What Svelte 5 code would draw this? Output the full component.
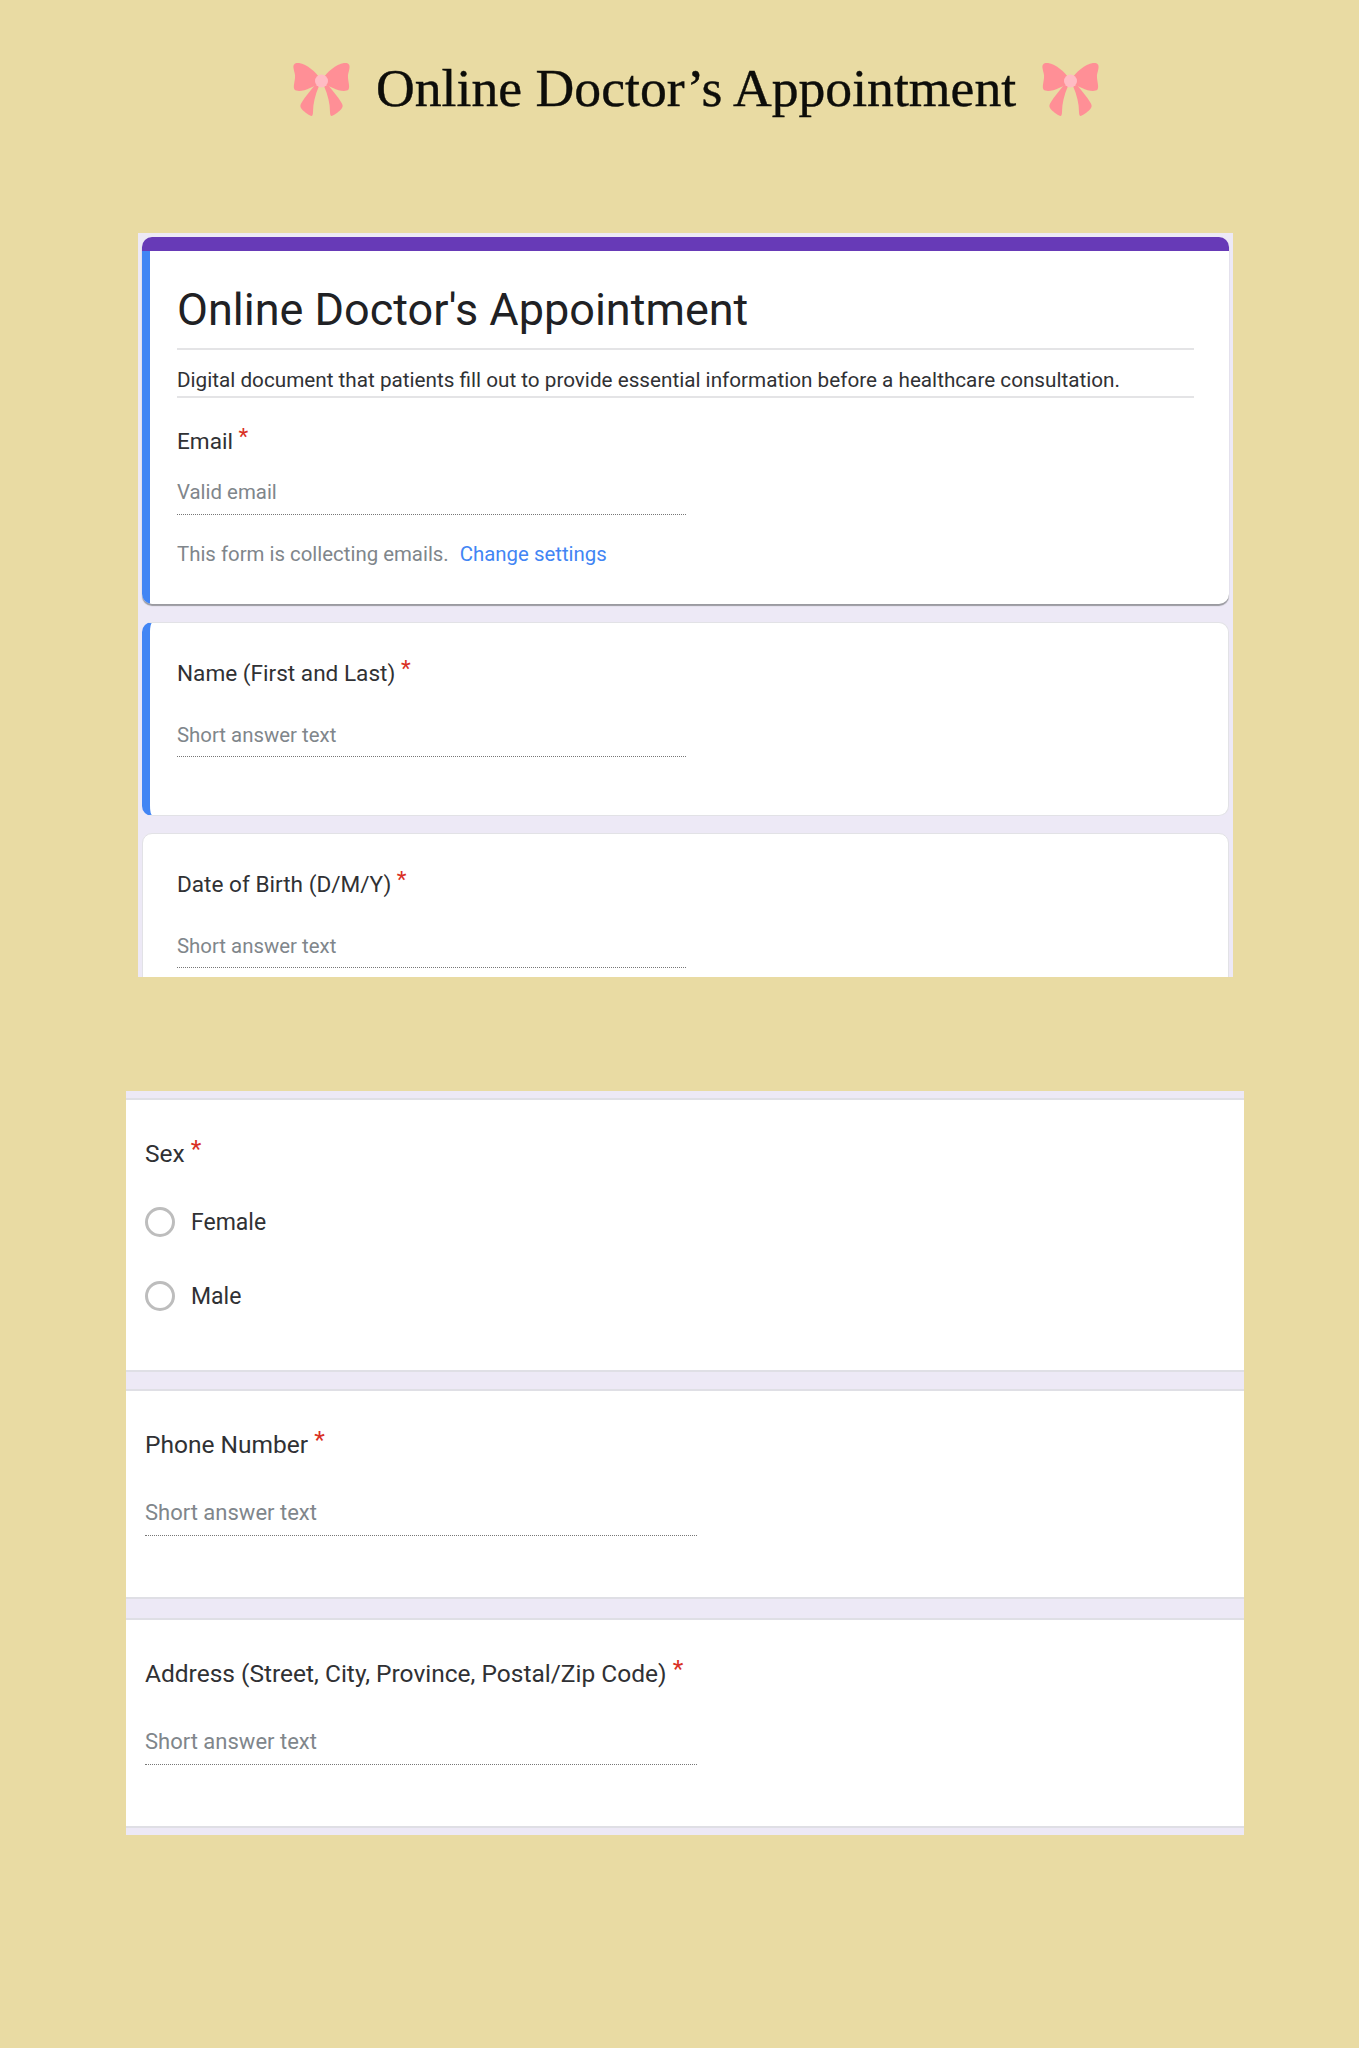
<script>
	const topFields = [
		{ label: 'Name (First and Last)', active: true },
		{ label: 'Date of Birth (D/M/Y)', active: false }
	];
	const bottomFields = ['Phone Number', 'Address (Street, City, Province, Postal/Zip Code)'];
	const sexOptions = ['Female', 'Male'];
</script>

{#snippet bow()}
	<svg class="bow" viewBox="8 12 57 54" aria-hidden="true">
		{#each ['', 'translate(73 0) scale(-1 1)'] as flip}
			<g transform={flip} fill="#ff8f96">
				<path d="M36 30C31 22 22 14 14 13C10 12.500 8 14 8.500 18C9 22 10.500 24 10 28C9.500 33 8 37 9.500 39.500C12 42 19 41 25 38C30 36 34 34 36 32Z" />
				<path d="M30 35C25 41 20 47 17 52C15 55 15 56 16 58C18 61 23 65 26.500 66C27.500 66 28 64 28 62C28 54 30 45 34 36Z" />
			</g>
		{/each}
		<circle cx="36.5" cy="31" r="6.5" fill="#ffbcc4" />
	</svg>
{/snippet}

<main class="page">
	<header class="header">
		{@render bow()}
		<h1>Online Doctor’s Appointment</h1>
		{@render bow()}
	</header>

	<section class="panel panel-top">
		<div class="card card-head">
			<div class="purple"></div>
			<div class="head-body">
				<h2>Online Doctor's Appointment</h2>
				<p class="desc">Digital document that patients fill out to provide essential information before a healthcare consultation.</p>
				<p class="label email-label">Email <span class="star">*</span></p>
				<div class="answer email-answer">Valid email</div>
				<p class="collect">This form is collecting emails.<a href="#settings">Change settings</a></p>
			</div>
		</div>

		{#each topFields as field}
			<div class="card card-field" class:active={field.active}>
				<p class="label">{field.label} <span class="star">*</span></p>
				<div class="answer">Short answer text</div>
			</div>
		{/each}
	</section>

	<section class="panel panel-bottom">
		<div class="row row-sex">
			<p class="label">Sex <span class="star">*</span></p>
			{#each sexOptions as option}
				<div class="option">
					<span class="radio"></span>
					<span>{option}</span>
				</div>
			{/each}
		</div>
		{#each bottomFields as field}
			<div class="row row-field">
				<p class="label">{field} <span class="star">*</span></p>
				<div class="answer">Short answer text</div>
			</div>
		{/each}
	</section>
</main>

<style>
	:global(body) {
		margin: 0;
		background: #e9dba3;
	}
	.page {
		height: 2048px;
		font-family: Roboto, "Liberation Sans", sans-serif;
		color: #202124;
		overflow: hidden;
	}
	p {
		margin: 0;
	}

	.header {
		display: flex;
		align-items: flex-start;
		height: 233px;
		box-sizing: border-box;
		padding: 62px 0 0 293px;
	}
	.bow {
		width: 57px;
		height: 54px;
		flex: none;
	}
	h1 {
		margin: -2px 26px 0 26px;
		font-family: "Liberation Serif", serif;
		font-size: 53.7px;
		line-height: 56px;
		font-weight: 400;
		color: #0d0d0a;
		white-space: nowrap;
		-webkit-text-stroke: 0.4px #0d0d0a;
	}

	.panel {
		background: #ede9f6;
	}
	.panel-top {
		width: 1095px;
		height: 744px;
		margin-left: 138px;
		box-sizing: border-box;
		padding: 4px 4px 0;
		overflow: hidden;
	}
	.card {
		background: #fff;
		border-radius: 10px;
		box-sizing: border-box;
	}
	.card-head {
		height: 367px;
		overflow: hidden;
		box-shadow: 0 2px 1px #9a9aa0;
		margin-bottom: 18px;
	}
	.purple {
		height: 14px;
		background: #673ab7;
	}
	.head-body {
		height: 353px;
		box-sizing: border-box;
		border-left: 8px solid #4285f4;
		padding: 0 35px 0 27px;
	}
	h2 {
		margin: 0;
		padding-top: 33px;
		height: 99px;
		box-sizing: border-box;
		font-size: 45px;
		line-height: 52px;
		font-weight: 400;
		border-bottom: 2px solid #e4e4e6;
	}
	.desc {
		height: 48px;
		box-sizing: border-box;
		padding-top: 17px;
		font-size: 20.7px;
		line-height: 26px;
		border-bottom: 2px solid #e4e4e6;
		color: #303134;
	}
	.label {
		font-size: 22.6px;
		line-height: 30px;
		color: #303134;
	}
	.star {
		color: #d93025;
		vertical-align: 5px;
		line-height: 0;
	}
	.email-label {
		padding-top: 29px;
	}
	.answer {
		width: 509px;
		font-size: 20.4px;
		line-height: 26px;
		color: #80868b;
		border-bottom: 1px dotted #777;
	}
	.email-answer {
		margin-top: 22px;
		padding-bottom: 9px;
	}
	.collect {
		margin-top: 26px;
		font-size: 20.4px;
		line-height: 26px;
		color: #80868b;
	}
	.collect a {
		margin-left: 11px;
		color: #4285f4;
		text-decoration: none;
	}

	.card-field {
		height: 194px;
		margin-bottom: 17px;
		padding: 36px 20px 0 34px;
		border: 1px solid #e2e2e6;
	}
	.card-field.active {
		border-left: 8px solid #4285f4;
		padding-left: 27px;
	}
	.card-field .answer {
		margin-top: 33px;
		padding-bottom: 8px;
	}

	.panel-bottom {
		width: 1118px;
		height: 744px;
		margin: 114px 0 0 126px;
		box-sizing: border-box;
		padding-top: 7px;
	}
	.row {
		background: #fff;
		border-top: 2px solid #dfdfe5;
		border-bottom: 2px solid #dfdfe5;
		box-sizing: border-box;
		padding: 38px 20px 0 19px;
	}
	.row-sex {
		height: 274px;
		margin-bottom: 17px;
	}
	.row-field {
		height: 210px;
		margin-bottom: 19px;
	}
	.row .label {
		font-size: 24.5px;
		line-height: 32px;
	}
	.option {
		display: flex;
		align-items: center;
		gap: 16px;
		height: 74px;
		font-size: 23px;
		color: #303134;
	}
	.row-sex .label {
		margin-bottom: 15px;
	}
	.radio {
		width: 30px;
		height: 30px;
		box-sizing: border-box;
		border: 3px solid #bdbdbd;
		border-radius: 50%;
		flex: none;
	}
	.row .answer {
		width: 552px;
		margin-top: 39px;
		padding-bottom: 9px;
		font-size: 22px;
	}
</style>
